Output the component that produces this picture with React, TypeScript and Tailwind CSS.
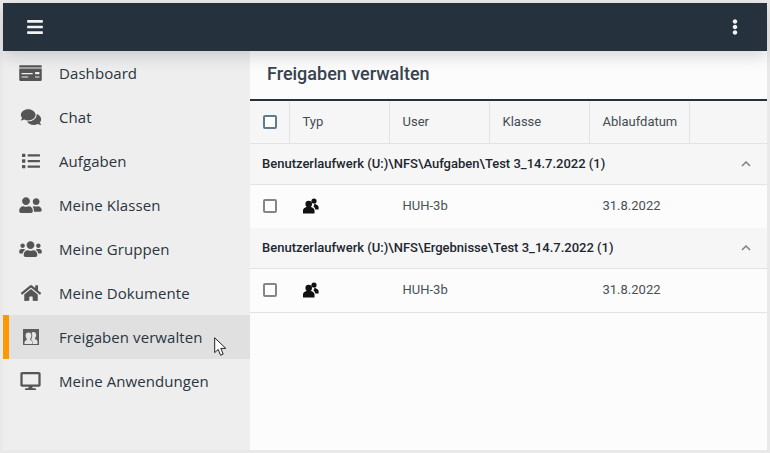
import React from 'react';
import { FaBars, FaComments, FaDesktop, FaEllipsisV, FaHome, FaList, FaMoneyCheck, FaUserFriends, FaUsers } from 'react-icons/fa';

const ShareIcon = () => (
  <svg viewBox="0 0 16 16" className="w-[16px] h-[16px]">
    <rect width="16" height="16" fill="#5c5c5c" />
    <path fill="#e4e4e4" d="M10.500 3c1.800 0 2.700 1.300 2.700 3 0 1.300-.5 2.400-1.200 3.200l.2 1c1.200.4 2.300 1 2.300 2.300V15H10c0-2-.7-3.500-2-4.500.9-1.200 1.300-2.600 1.200-4.200 0-1.300-.3-2.300-.8-2.600.5-.4 1.300-.7 2.100-.7z" />
    <path fill="#e4e4e4" d="M5.500 3.500c1.900 0 2.900 1.300 2.900 3.100 0 1.300-.5 2.500-1.300 3.300l.2 1.100c1.400.4 2.200 1.300 2.200 2.600V15H1.500v-1.400c0-1.300.8-2.200 2.200-2.600l.2-1.100C3.100 9.100 2.600 7.900 2.600 6.600c0-1.800 1-3.100 2.900-3.100z" />
  </svg>
);

const PeopleIcon = () => (
  <svg viewBox="0 0 16 16" className="w-[16px] h-[16px]">
    <circle cx="11" cy="3" r="2.600" fill="#111" />
    <path fill="#111" d="M11.800 5.200l1.200 1.300c1.500.4 2.600 1.400 2.600 2.800v2.200h-3.200c-.3-1.300-.9-2.300-1.900-3z" />
    <circle cx="5.700" cy="6" r="3.300" fill="#111" />
    <path fill="#111" d="M4 8.600h3.400l1.600 1c1.700.5 2.500 1.500 2.500 3v2.900H0v-2.900c0-1.500.8-2.500 2.400-3z" />
  </svg>
);

const Cursor = () => (
  <svg viewBox="0 0 13 20" className="absolute left-[205px] top-[22px] w-[13px] h-[20px]">
    <path fill="#fff" stroke="#222" strokeWidth="1" d="M.7.8v14.800l3.500-3.200 2.300 5.800 2.700-1.100-2.400-5.700h5z" />
  </svg>
);

const navItems = [
  { label: 'Dashboard', icon: <FaMoneyCheck className="w-[23px] h-[18px]" /> },
  { label: 'Chat', icon: <FaComments className="w-[22px] h-[18px]" /> },
  { label: 'Aufgaben', icon: <FaList className="w-[18px] h-[18px]" /> },
  { label: 'Meine Klassen', icon: <FaUserFriends className="w-[23px] h-[18px]" /> },
  { label: 'Meine Gruppen', icon: <FaUsers className="w-[23px] h-[18px]" /> },
  { label: 'Meine Dokumente', icon: <FaHome className="w-[22px] h-[18px]" /> },
  { label: 'Freigaben verwalten', icon: <ShareIcon />, active: true },
  { label: 'Meine Anwendungen', icon: <FaDesktop className="w-[21px] h-[18px]" /> },
];

const columns = ['Typ', 'User', 'Klasse', 'Ablaufdatum'];

const groups = ['Benutzerlaufwerk (U:)\\NFS\\Aufgaben\\Test 3_14.7.2022 (1)', 'Benutzerlaufwerk (U:)\\NFS\\Ergebnisse\\Test 3_14.7.2022 (1)'];

const Checkbox = () => <span className="block w-[14px] h-[14px] rounded-[2px] border-2 border-[#858585] bg-white" />;

const App: React.FC = () => {
  return (
    <div className="w-[770px] h-[453px] p-[3px] bg-[#e9e9e9] overflow-hidden font-['Roboto',sans-serif]">
      <div className="w-full h-full flex flex-col bg-white">
        <header className="relative z-10 h-[48px] shrink-0 flex items-center justify-between pl-[24px] pr-[26px] bg-[#25323e] text-[#f2f2f2] shadow-[0_6px_16px_rgba(0,0,0,0.14)]">
          <FaBars className="w-[16px] h-[18px]" />
          <FaEllipsisV className="w-[12px] h-[16px]" />
        </header>
        <div className="flex flex-1 min-h-0">
          <nav className="w-[247px] shrink-0 bg-[#eeeeee]">
            {navItems.map((item) => (
              <div
                key={item.label}
                className={`relative h-[44px] flex items-center font-['Open_Sans',sans-serif] text-[15px] tracking-[0.08px] text-[#2a3540] border-l-[6px] ${item.active ? 'bg-[#e0e0e0] border-[#ff9800]' : 'border-transparent'}`}
              >
                <span className="w-[50px] flex justify-center text-[#555555] pr-[7px]">{item.icon}</span>
                <span>{item.label}</span>
                {item.active && <Cursor />}
              </div>
            ))}
          </nav>
          <main className="flex-1 min-w-0 bg-[#fcfcfc]">
            <h1 className="h-[50px] flex items-center pl-[17px] pb-[4px] text-[18px] font-medium text-[#37434f] border-b-2 border-[#25323e]">Freigaben verwalten</h1>
            <div className="h-[43px] flex bg-[#f6f6f6] border-b border-[#e3e3e3] text-[13px] text-[#444b52]">
              <div className="w-[40px] flex items-center justify-center border-r border-[#e3e3e3]">
                <span className="block w-[14px] h-[14px] rounded-[2px] border-2 border-[#5e7b90] bg-white" />
              </div>
              {columns.map((col) => (
                <div key={col} className="w-[100px] flex items-center pl-[12.5px] border-r border-[#e3e3e3]">
                  {col}
                </div>
              ))}
            </div>
            {groups.map((group, index) => (
              <div key={group}>
                <div className="h-[41px] flex items-center justify-between pl-[12px] pr-[16px] bg-[#f6f6f6] border-b border-[#e3e3e3] text-[13px] font-medium text-[#1d2730]">
                  {group}
                  <svg viewBox="0 0 10 6" className="w-[10px] h-[6px]">
                    <path d="M1 5l4-4 4 4" fill="none" stroke="#808080" strokeWidth="1.500" />
                  </svg>
                </div>
                <div className={`flex items-center pb-[2px] bg-[#fcfcfc] text-[13px] text-[#4a4f54] ${index === 1 ? 'h-[44px] border-b border-[#e3e3e3]' : 'h-[43px]'}`}>
                  <div className="w-[40px] flex justify-center"><Checkbox /></div>
                  <div className="w-[100px] pl-[13px]"><PeopleIcon /></div>
                  <div className="w-[200px] pl-[12.5px]">HUH-3b</div>
                  <div className="pl-[12.5px]">31.8.2022</div>
                </div>
              </div>
            ))}
          </main>
        </div>
      </div>
    </div>
  );
};

export default App;
